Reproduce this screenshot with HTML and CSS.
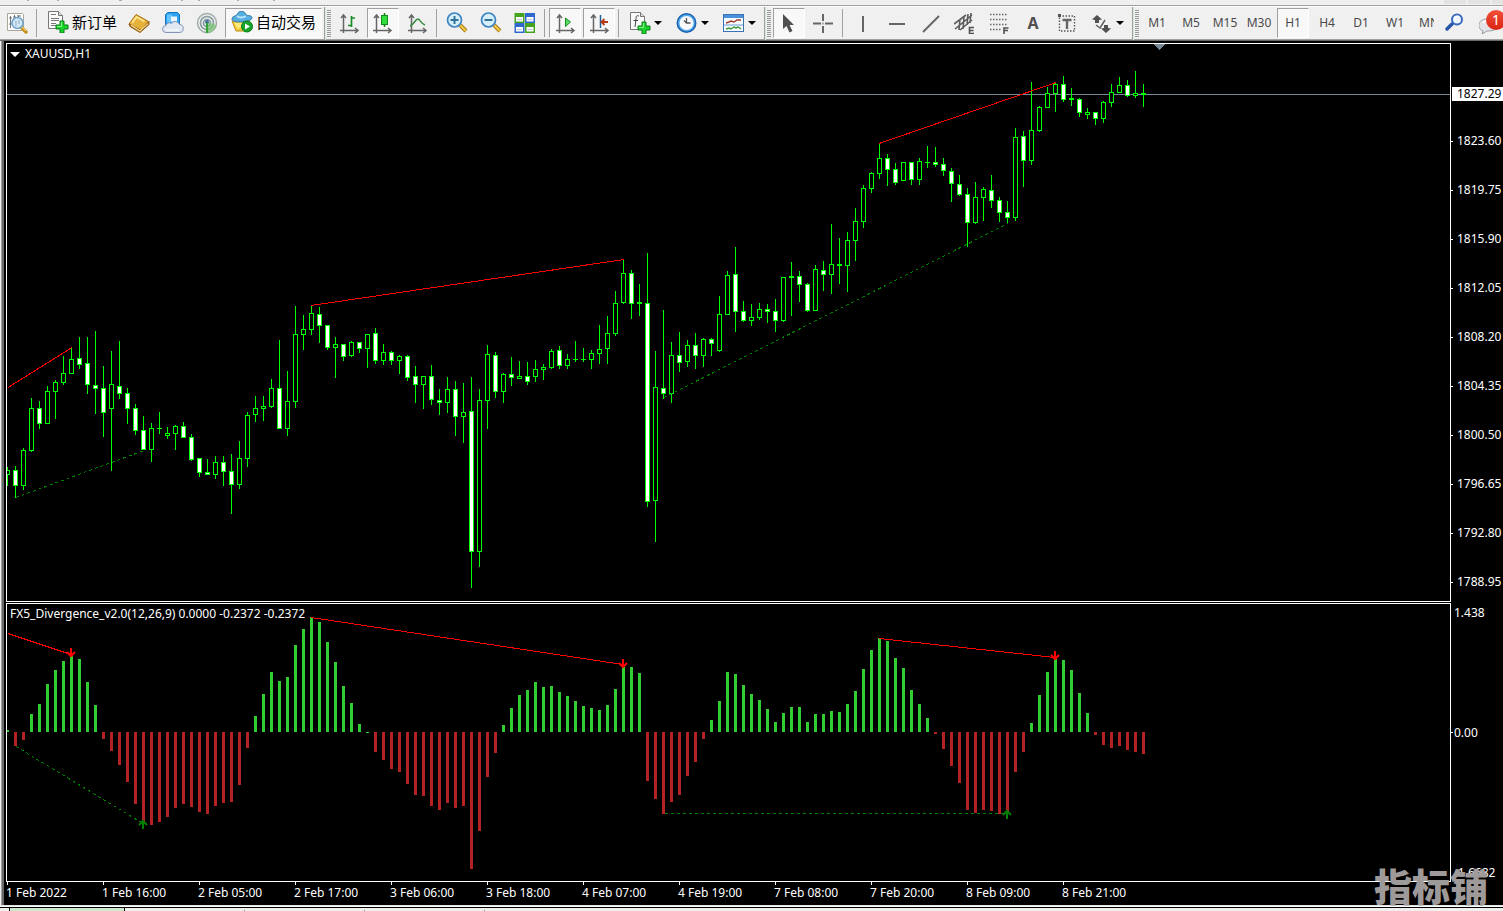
FILE: index.html
```html
<!DOCTYPE html>
<html lang="zh-CN">
<head>
<meta charset="utf-8">
<title>XAUUSD,H1</title>
<link rel="stylesheet" href="styles.css">
<script src="chart.js" defer></script>
</head>
<body>
<div class="menu-edge">
  <svg class="menu-marks" aria-hidden="true"><path d="M27 .5h2M57 .5h2M119 .5h3M181 .5h2M198 .5h2M237 .5h2M273 .5h2" stroke="#aaa"/></svg>
  <span class="win-btn"></span><span class="win-btn"></span><span class="win-btn win-btn-cut"></span>
</div>
<header class="toolbar">
  <div class="group group-first">
    <button class="tool" aria-label="Market view">
      <svg class="icon" viewBox="0 0 22 22"><path d="M1.500 1.500h15l1 1v16h-16z" fill="#fff" stroke="#aaa79a"/><path d="M4.500 4v12M8.500 3v7M12.500 3v5M3 6h3M7 5h3M11 4h4M3 12h3" stroke="#777"/><path d="m15 15 5 5" stroke="#c69320" stroke-width="3.500" stroke-linecap="round"/><path d="m15 14 5 5" stroke="#ffe28a"/><circle cx="11.500" cy="11" r="5.500" fill="#cfe8f8" fill-opacity=".9" stroke="#6fa4cc" stroke-width="1.500"/><path d="M10 9v5M13 8v4" stroke="#86a9c4"/></svg>
    </button>
    <span class="sep"></span>
    <button class="tool tool-order">
      <svg class="icon" viewBox="0 0 22 22"><path d="M1.500.500h10l4 4v13h-14z" fill="#fafafa" stroke="#777"/><path d="M11.500.500v4h4" fill="#ddd" stroke="#777"/><path d="M4 3.500h5M4 7.500h8M4 9.500h8M4 12.500h5M4 14.500h5" stroke="#777"/><path d="M13 10h4v4h4v4h-4v4h-4v-4H9v-4h4z" fill="#19d52a" stroke="#087d15"/><path d="M14.500 11v4.500H10" fill="none" stroke="#8ef58f"/></svg>
      <span>新订单</span>
    </button>
    <button class="tool" aria-label="Library">
      <svg class="icon" viewBox="0 0 22 22"><path d="m1 12 7-9.500 12.500 7-7.500 9z" fill="#e6b138" stroke="#a86d12"/><path d="m1 12 1 2.500 10 6 9-8v-3l-8 9z" fill="#c98a20" stroke="#8b580d"/><path d="M3 13 12 19l8-7.500" fill="none" stroke="#fff4c8"/><path d="m4 11 4.500-6 8 4.500" fill="none" stroke="#ffe58d" stroke-width="2"/></svg>
    </button>
    <button class="tool" aria-label="Virtual hosting">
      <svg class="icon" viewBox="0 0 22 22"><path d="m3.500 2.500 2-2h10l2 2v10h-14z" fill="#2da2f2" stroke="#1673bd"/><path d="M5 2.500h5v8H5z" fill="#67c4ff"/><path d="M9 4.500h6v5H9z" fill="#e8f7ff"/><path d="M4 20.500h13a4 4 0 0 0 .500-8 4.500 4.500 0 0 0-8-1 3.500 3.500 0 0 0-5.500 2 3.500 3.500 0 0 0 0 7z" fill="#e1e8f2" stroke="#8595b6"/><path d="M4 18h13" stroke="#fff"/></svg>
    </button>
    <button class="tool" aria-label="Signals">
      <svg class="icon" viewBox="0 0 22 22"><circle cx="11" cy="11" r="9.500" fill="#e9eee9" stroke="#a5adb1" stroke-width="1.500"/><circle cx="11" cy="11" r="6.500" fill="none" stroke="#8c9ba4" stroke-width="1.600"/><circle cx="11" cy="11" r="3.500" fill="none" stroke="#7d939c" stroke-width="1.500"/><path d="M11 10v11a10 10 0 0 0 9.500-8z" fill="#73c46c" fill-opacity=".65"/><circle cx="11" cy="10" r="2" fill="#46709b"/><path d="M11 11v10" stroke="#31a334" stroke-width="2"/></svg>
    </button>
    <button class="tool tool-auto pressed" aria-pressed="true">
      <svg class="icon" viewBox="0 0 22 22"><path d="m1 10 4 10h10l4-9z" fill="#f2cc3b" stroke="#bd8b16"/><path d="M3 12h12l-8 6z" fill="#ffe97c"/><path d="M1 8c0-3 4-3 5-4 1-5 8-5 9 0 2 1 6 0 6 3 0 4-20 6-20 1z" fill="#57aee0" stroke="#2c7aa9"/><path d="M6 5c2 2 6 2 9 0" fill="none" stroke="#b8e5fb" stroke-width="2"/><circle cx="16" cy="15.500" r="5.500" fill="#16a52a" stroke="#0b7c1b"/><path d="m14 12.500 5 3-5 3z" fill="#fff"/></svg>
      <span>自动交易</span>
    </button>
  </div>

  <div class="group">
    <span class="grip"></span>
    <button class="tool" aria-label="Bar chart">
      <svg class="icon" viewBox="0 0 22 22"><path d="M5.500 3v18M2 18.500h18M3 6l2.500-3L8 6M17 16l3 2.500-3 2.500" class="axis"/><path d="M13.500 4v11M13.500 6H17M10 13.500h3" fill="none" stroke="#1b8b27" stroke-width="1.700"/></svg>
    </button>
    <button class="tool pressed" aria-label="Candlesticks" aria-pressed="true">
      <svg class="icon" viewBox="0 0 22 22"><path d="M4.500 3v18M1 18.500h18M2 6l2.500-3L7 6M16 16l3 2.500-3 2.500" class="axis"/><path d="M12.500 1v14" stroke="#147a1e" stroke-width="1.500"/><rect x="9.500" y="3.500" width="6" height="9" fill="#31dc3e" stroke="#128b1d"/></svg>
    </button>
    <button class="tool" aria-label="Line chart">
      <svg class="icon" viewBox="0 0 22 22"><path d="M5.500 3v18M2 18.500h18M3 6l2.500-3L8 6M17 16l3 2.500-3 2.500" class="axis"/><path d="M4 14c4-1 5-7 8-7 2 0 3 5 7 6" fill="none" stroke="#378c3e" stroke-width="1.500"/></svg>
    </button>
    <span class="sep"></span>
    <button class="tool" aria-label="Zoom in">
      <svg class="icon" viewBox="0 0 22 22"><path d="m14 13 6 6" stroke="#a87811" stroke-width="4"/><path d="m14 13 6 6" stroke="#f2cd4b" stroke-width="2"/><circle cx="8.500" cy="8" r="7" fill="#d6effb" stroke="#3c83c0" stroke-width="1.700"/><path d="M8.500 4v8M4.500 8h8" stroke="#31729c" stroke-width="2"/></svg>
    </button>
    <button class="tool" aria-label="Zoom out">
      <svg class="icon" viewBox="0 0 22 22"><path d="m14 13 6 6" stroke="#a87811" stroke-width="4"/><path d="m14 13 6 6" stroke="#f2cd4b" stroke-width="2"/><circle cx="8.500" cy="8" r="7" fill="#d6effb" stroke="#3c83c0" stroke-width="1.700"/><path d="M4.500 8h8" stroke="#31729c" stroke-width="2"/></svg>
    </button>
    <button class="tool" aria-label="Tile windows">
      <svg class="icon" viewBox="0 0 22 22"><path d="M.500 1h10v10H.500zM11 11h10v10H11z" fill="#45a41d"/><path d="M11 1h10v10H11zM.500 11h10v10H.500z" fill="#2e68ce"/><path d="M2 5h7v4.500H2zM12.500 5h7v4.500h-7zM2 15h7v4.500H2zM12.500 15h7v4.500h-7z" fill="#fff"/><path d="M3 7.500h5M13.500 7.500h5M3 17.500h5M13.500 17.500h5" stroke="#b7c8dd"/></svg>
    </button>
    <span class="sep"></span>
    <button class="tool pressed" aria-label="Auto scroll" aria-pressed="true">
      <svg class="icon" viewBox="0 0 22 22"><path d="M5.500 3v18M2 18.500h18M3 6l2.500-3L8 6M17 16l3 2.500-3 2.500" class="axis"/><path d="m11.500 6 5 4-5 4.500z" fill="#5adb62" stroke="#188b25"/></svg>
    </button>
    <button class="tool pressed" aria-label="Chart shift" aria-pressed="true">
      <svg class="icon" viewBox="0 0 22 22"><path d="M5.500 3v18M2 18.500h18M3 6l2.500-3L8 6M17 16l3 2.500-3 2.500" class="axis"/><path d="M12.500 3v13" stroke="#205f91" stroke-width="1.500"/><path d="M20 10h-6M16.500 7 13.500 10l3 3" fill="none" stroke="#b33a16" stroke-width="1.800"/></svg>
    </button>
    <span class="sep"></span>
    <button class="tool tool-menu" aria-label="Indicators">
      <svg class="icon" viewBox="0 0 22 22"><path d="M1.500.500h10l4 4v13h-14z" fill="#fafafa" stroke="#777"/><path d="M11.500.500v4h4" fill="#ddd" stroke="#777"/><path d="M10 4C7 3 7 5 7 7l-1 8M4.500 8.500H9" fill="none" stroke="#444"/><path d="M13 10h4v4h4v4h-4v4h-4v-4H9v-4h4z" fill="#19d52a" stroke="#087d15"/><path d="M14.500 11v4.500H10" fill="none" stroke="#8ef58f"/></svg>
      <svg class="caret" viewBox="0 0 8 4"><path d="M0 0h8L4 4z"/></svg>
    </button>
    <button class="tool tool-menu" aria-label="Periods">
      <svg class="icon" viewBox="0 0 22 22"><circle cx="10.500" cy="11" r="10" fill="#185fae"/><circle cx="10.500" cy="11" r="8.500" fill="#55a9ec"/><circle cx="10.500" cy="11" r="7" fill="#f8f9fa"/><path d="M10.500 6v5h4M10.500 11 8 8.500" fill="none" stroke="#555" stroke-width="1.300"/></svg>
      <svg class="caret" viewBox="0 0 8 4"><path d="M0 0h8L4 4z"/></svg>
    </button>
    <button class="tool tool-menu" aria-label="Templates">
      <svg class="icon" viewBox="0 0 22 22"><rect x=".500" y="2.500" width="20" height="17" fill="#f6fbff" stroke="#3973b5"/><path d="M1 3h19v3H1z" fill="#4b90db"/><path d="M1 13h19" stroke="#6b9dce"/><path d="m3 11 3-1 2-1 3 1 3-2h4" fill="none" stroke="#a33f2c" stroke-width="1.400"/><path d="m3 17 3-1 2 1 3-2 2 1 2-1 3 2" fill="none" stroke="#3a9c38" stroke-width="1.400"/></svg>
      <svg class="caret" viewBox="0 0 8 4"><path d="M0 0h8L4 4z"/></svg>
    </button>
  </div>

  <div class="group">
    <span class="grip"></span>
    <button class="tool pressed" aria-label="Cursor" aria-pressed="true">
      <svg class="icon" viewBox="0 0 22 22"><path d="M5 2v15l3.500-3 3 6.500 3-1.500-3-6H16z" fill="#505050"/></svg>
    </button>
    <button class="tool" aria-label="Crosshair">
      <svg class="icon" viewBox="0 0 22 22"><path d="M11 2v7M11 14v7M1 11.500h8M13 11.500h8M10.500 11.500h1" class="line"/></svg>
    </button>
    <span class="sep"></span>
    <button class="tool" aria-label="Vertical line">
      <svg class="icon" viewBox="0 0 22 22"><path d="M11 4v16" class="line"/></svg>
    </button>
    <button class="tool" aria-label="Horizontal line">
      <svg class="icon" viewBox="0 0 22 22"><path d="M3 12h16" class="line"/></svg>
    </button>
    <button class="tool" aria-label="Trendline">
      <svg class="icon" viewBox="0 0 22 22"><path d="M3 20 19 4" class="line"/></svg>
    </button>
    <button class="tool" aria-label="Channel">
      <svg class="icon" viewBox="0 0 22 22"><path d="M0 12 12 3M1 17 18 3M6 18 18 8M6 7l-1 11M10 4 9 17M14 2l-1 11M17 1l-1 10" stroke="#5c5c5c" stroke-width="1.600"/><path d="M20 15.500h-4.500v6H20M16 18.500h3.500" fill="none" stroke="#505050" stroke-width="1.600"/></svg>
    </button>
    <button class="tool" aria-label="Fibonacci">
      <svg class="icon" viewBox="0 0 22 22"><path d="M2 2.500h18M2 7.500h18M2 12.500h18M2 17.500h12" stroke="#666" stroke-width="1.400" stroke-dasharray="1.500 1.500"/><path d="M20.500 16H16v6M16 18.500h4" fill="none" stroke="#505050" stroke-width="1.600"/></svg>
    </button>
    <button class="tool letter" aria-label="Text">A</button>
    <button class="tool" aria-label="Text label">
      <svg class="icon" viewBox="0 0 22 22"><rect x="3.500" y="4" width="15" height="15" fill="none" stroke="#555" stroke-width="1.400" stroke-dasharray="1.500 1.500"/><path d="M2 2h3v3H2z" fill="#555"/><path d="M6.500 8h9M11 8v9" fill="none" stroke="#666" stroke-width="2.400"/></svg>
    </button>
    <button class="tool tool-menu" aria-label="Arrows">
      <svg class="icon" viewBox="0 0 22 22"><path d="m6 3 5 4.500L8 8v3H4V8l-3-.500z" fill="#505050"/><path d="m15 21-5-4.500 3-.500v-3h4v3l3 .500z" fill="#505050"/><path d="m5 13 4 3 5-8" fill="none" stroke="#606060" stroke-width="1.500"/></svg>
      <svg class="caret" viewBox="0 0 8 4"><path d="M0 0h8L4 4z"/></svg>
    </button>
  </div>

  <div class="group group-frames">
    <span class="grip"></span>
    <button class="tool">M1</button>
    <button class="tool">M5</button>
    <button class="tool">M15</button>
    <button class="tool">M30</button>
    <button class="tool pressed" aria-pressed="true">H1</button>
    <button class="tool">H4</button>
    <button class="tool">D1</button>
    <button class="tool">W1</button>
    <button class="tool">MN</button>
  </div>

  <div class="side">
    <button class="tool" aria-label="Search">
      <svg class="icon" viewBox="0 0 22 22"><path d="m9 12-5 5" stroke="#2856a8" stroke-width="3.500" stroke-linecap="round"/><circle cx="14" cy="7.500" r="5" fill="#eef5fc" stroke="#3867bd" stroke-width="2"/><path d="M11.500 6.500a3 3 0 0 1 4-2" fill="none" stroke="#fff" stroke-width="1.500"/></svg>
    </button>
    <button class="tool chat" aria-label="Messages">
      <svg class="icon" viewBox="0 0 22 22"><path d="M8 7c-10 0-10 10-4 12l-1 3 5-3c8 0 10-2 10-6z" fill="#e3e3e8" stroke="#9a9aa3"/><path d="M4 11c2-3 5-3 8-2" fill="none" stroke="#fff" stroke-width="2"/></svg>
      <span class="badge">1</span>
    </button>
  </div>
</header>

<main class="window">
  <section class="plot plot-price">
    <svg class="canvas" id="price" aria-label="XAUUSD candles"></svg>
    <h1 class="title"><svg class="title-caret" viewBox="0 0 10 5"><path d="M0 0h10L5 5z"/></svg>XAUUSD,H1</h1>
  </section>
  <div class="scale scale-price">
    <ul class="levels">
      <li>1823.60</li><li>1819.75</li><li>1815.90</li><li>1812.05</li><li>1808.20</li>
      <li>1804.35</li><li>1800.50</li><li>1796.65</li><li>1792.80</li><li>1788.95</li>
    </ul>
    <span class="current">1827.29</span>
  </div>
  <section class="plot plot-osc">
    <svg class="canvas" id="osc" aria-label="FX5 Divergence histogram"></svg>
    <h2 class="title">FX5_Divergence_v2.0(12,26,9) 0.0000 -0.2372 -0.2372</h2>
  </section>
  <div class="scale scale-osc">
    <span class="high">1.438</span><span class="zero">0.00</span><span class="low">-1.6682</span>
  </div>
  <ol class="times">
    <li>1 Feb 2022</li><li>1 Feb 16:00</li><li>2 Feb 05:00</li><li>2 Feb 17:00</li><li>3 Feb 06:00</li><li>3 Feb 18:00</li>
    <li>4 Feb 07:00</li><li>4 Feb 19:00</li><li>7 Feb 08:00</li><li>7 Feb 20:00</li><li>8 Feb 09:00</li><li>8 Feb 21:00</li>
  </ol>
  <div class="watermark">指标铺</div>
</main>
<footer class="tabs"><span class="tab-active"></span><span class="tab"></span><span class="tab"></span><span class="tab"></span></footer>
</body>
</html>
```

FILE: styles.css
```css
* { box-sizing: border-box; }

body {
  margin: 0;
  height: 100vh;
  display: flex;
  flex-direction: column;
  overflow: hidden;
  background: #f0f0f0;
  color: #000;
  font: 12px/16px "Noto Sans", "Noto Sans CJK SC", sans-serif;
}

ul, ol { margin: 0; padding: 0; list-style: none; }

/* menu edge */
.menu-edge {
  position: relative;
  flex: none;
  height: 7px;
  display: flex;
  justify-content: flex-end;
  gap: 2px;
  border-bottom: 1px solid #fff;
  box-shadow: inset 0 -1px #a0a0a0;
}
.menu-marks { position: absolute; left: 0; top: 0; width: 100%; height: 2px; }
.win-btn { width: 22px; height: 4px; background: #e3e3e3; }
.win-btn-cut { width: 11px; }

/* toolbar */
.toolbar {
  flex: none;
  display: flex;
  height: 34px;
  border-bottom: 1px solid #696969;
  box-shadow: inset 0 -1px #a0a0a0;
}
.group {
  flex: none;
  display: flex;
  align-items: flex-start;
  gap: 2px;
  padding: 1px 2px 0 2px;
  border-left: 1px solid #a0a0a0;
  box-shadow: inset 1px 0 #d5ead8;
}
.group-first { padding-left: 1px; border-left: 0; box-shadow: none; }
.group-frames { flex: 1 1 0; min-width: 0; overflow: hidden; }
.grip {
  flex: none;
  width: 4px;
  height: 27px;
  margin-top: 2px;
  background: repeating-linear-gradient(#999 0 1px, #f0f0f0 1px 2px);
}
.sep { flex: none; width: 1px; height: 28px; margin: 1px 2px 0 1px; background: #a0a0a0; }
.tool {
  flex: none;
  display: flex;
  align-items: center;
  justify-content: center;
  width: 32px;
  height: 30px;
  padding: 0;
  border: 1px solid transparent;
  background: none;
  color: #4a4a4a;
  font: 12px/16px "Noto Sans", sans-serif;
}
.pressed { background: #f8f8f8; border-color: #a0a0a0 #fff #fff #a0a0a0; }
.icon { flex: none; width: 22px; height: 22px; }
.tool-order, .tool-auto {
  width: auto;
  gap: 3px;
  padding: 0 3px 2px 5px;
  color: #000;
  font: 15px/20px "Noto Sans CJK SC", sans-serif;
}
.tool-auto { padding-right: 5px; }
.tool-menu { width: 45px; gap: 3px; }
.caret { flex: none; width: 8px; height: 4px; }
.letter { color: #505050; font-size: 16px; font-weight: 700; }
.axis { fill: none; stroke: #666; stroke-width: 1.5px; }
.line { fill: none; stroke: #666; stroke-width: 2px; }

.side { flex: none; display: flex; gap: 2px; width: 69px; padding: 1px 0 0 4px; overflow: hidden; }
.chat { position: relative; justify-content: flex-start; padding-left: 6px; }
.badge {
  position: absolute;
  left: 13px;
  top: 1px;
  width: 20px;
  height: 20px;
  border-radius: 50%;
  background: linear-gradient(#f0503a, #d92410);
  color: #fff;
  font-size: 14px;
  line-height: 20px;
  text-align: center;
}

/* chart window */
.window {
  position: relative;
  flex: 1;
  min-height: 0;
  display: grid;
  grid-template-columns: minmax(0, 1fr) 52px;
  grid-template-rows: minmax(0, 1fr) 279px 23px;
  margin-left: 2px;
  padding: 2px 0 0 2px;
  border-left: 2px solid #696969;
  box-shadow: -1px 0 #a0a0a0;
  background: #000;
  color: #fff;
}
.plot { position: relative; border: 1px solid #fff; overflow: hidden; }
.plot-price { margin-bottom: 1px; }
.canvas { position: absolute; left: 0; top: 0; width: 100%; height: 100%; }
.title {
  position: relative;
  display: flex;
  align-items: center;
  gap: 5px;
  margin: 2px 0 0 3px;
  font: 12px/16px "Noto Sans", sans-serif;
}
.title-caret { width: 10px; height: 5px; fill: #fff; }

.scale { position: relative; }
.levels { display: grid; gap: 33px; padding-top: 90px; }
.levels li { height: 16px; padding-left: 6px; background: linear-gradient(#fff, #fff) 0 8px / 2px 1px no-repeat; }
.current {
  position: absolute;
  left: 1px;
  right: 0;
  top: 44px;
  padding-left: 5px;
  height: 14px;
  line-height: 14px;
  background: #fff;
  color: #000;
}
.scale-osc { display: grid; align-content: start; padding: 2px 0 0 3px; }
.scale-osc::before {
  content: "";
  position: absolute;
  left: 0;
  top: 129px;
  width: 2px;
  height: 1px;
  background: #fff;
}
.scale-osc .zero { margin-top: 104px; }
.scale-osc .low { margin-top: 124px; }

.times { grid-column: 1 / -1; display: flex; overflow: hidden; }
.times li {
  flex: none;
  width: 96px;
  padding-top: 3px;
  background: linear-gradient(#fff, #fff) 1px 0 / 1px 3px no-repeat;
}
.watermark {
  position: absolute;
  right: 15px;
  bottom: 1px;
  color: #9f9a9a;
  font: 900 38px/38px "Noto Sans CJK SC", sans-serif;
}

/* bottom tabs */
.tabs {
  flex: none;
  display: flex;
  height: 6px;
  padding-left: 9px;
  border-top: 1px solid #e3e3e3;
  box-shadow: inset 0 1px #fff, inset 0 2px #000;
}
.tab-active { width: 116px; margin-top: 2px; background: #cce8cc; border: solid #000; border-width: 0 1px; }
.tab { width: 120px; margin-top: 4px; border-right: 1px solid #888; }
```

FILE: chart.js
```js
const NS = 'http://www.w3.org/2000/svg';
const STEP = 8;
const FIRST_X = 7;

// high, body top, body bottom, low; a trailing 1 marks a falling (filled) candle
const candles = `467 470 475 486|466 470 486 498 1|448 450 486 490|398 408 451 452|401 408 424 429 1|386 391 424 424|380 382 392 419|356 373 383 385|348 359 374 374|337 358 365 369 1|337 363 385 394 1|331 385 389 414 1|366 388 413 437 1|351 384 409 471|341 386 394 399 1|388 393 409 424 1|404 408 431 435 1|416 430 450 450 1|423 428 450 462|412 428 429 434|427 433 436 439|425 426 434 450|422 426 438 438 1|434 437 460 461 1|458 458 473 477 1|459 472 475 475 1|456 462 475 479|456 462 472 486 1|454 471 485 514 1|441 458 485 489|412 415 459 467|396 408 415 422|396 406 409 421|379 388 407 408|340 388 429 429 1|371 401 429 436|306 334 402 408|315 329 335 350|305 313 330 335|307 314 326 343 1|325 325 348 350 1|337 344 348 378|344 344 357 361 1|341 342 356 357|342 342 349 353 1|334 334 349 368|328 333 361 364 1|344 352 361 365|351 352 361 365 1|355 356 361 374|355 356 378 381 1|366 376 385 403 1|376 376 385 409|365 376 400 405 1|389 400 403 415 1|377 389 403 413|381 389 417 436 1|383 412 417 443|377 411 552 588 1|389 400 552 567|345 354 401 429|352 355 392 398 1|373 374 392 403|357 374 378 386 1|361 376 379 379|362 376 382 385 1|360 369 377 382|364 367 370 380|349 351 368 369|346 350 366 369 1|354 359 366 369|341 359 360 362|348 359 360 362|350 353 360 369|325 349 354 364|316 333 349 364|291 303 334 336|260 273 303 304|270 273 304 319 1|284 302 304 316|253 303 502 507 1|351 387 501 542|310 388 394 399 1|342 355 394 403|332 355 363 372 1|340 345 362 367|333 345 356 369 1|338 339 356 367|338 339 344 356 1|296 314 351 352|271 275 315 315|247 274 312 332 1|301 311 321 322 1|304 317 321 326|303 309 318 320|304 309 312 323 1|299 311 321 332 1|277 277 321 322|262 276 278 316|271 276 285 302 1|283 284 311 312 1|265 269 311 311|261 270 275 291 1|224 264 275 294|238 264 266 284|232 240 266 292|208 221 241 261|185 188 222 228|172 173 189 193|143 158 174 179|154 158 170 186 1|163 169 183 185 1|162 162 181 181|162 162 180 185 1|158 161 180 185|146 162 163 168|147 162 165 167 1|158 164 171 176 1|168 171 184 202 1|175 184 195 196 1|188 194 223 247 1|182 197 223 224|187 189 198 221|175 190 201 208 1|197 200 213 222 1|201 212 218 223 1|128 137 218 221|131 136 161 187 1|82 130 161 165|106 107 131 132|87 93 108 108|83 84 94 112|76 84 100 102 1|88 98 100 106|98 99 113 117 1|108 112 115 119|112 112 119 125 1|101 102 119 123|84 92 103 107|77 85 93 93|80 85 96 97 1|71 93 96 98|84 93 95 107`
  .split('|').map(row => row.split(' ').map(Number));

const histogram = [2, -14, -8, 18, 28, 48, 62, 71, 76, 73, 50, 27, -7, -19, -33, -50, -72, -92, -93, -90, -85, -76, -72, -75, -80, -82, -74, -71, -70, -53, -16,
  16, 38, 60, 51, 55, 87, 103, 115, 110, 90, 70, 46, 29, 8, 0, -20, -28, -37, -40, -52, -63, -64, -74, -78, -71, -76, -74, -137, -99, -45, -21,
  7, 24, 37, 42, 50, 45, 46, 40, 36, 31, 26, 24, 22, 27, 43, 66, 65, 59, -49, -67, -82, -70, -63, -44, -30, -7,
  12, 31, 60, 58, 47, 38, 32, 23, 10, 19, 25, 25, 10, 18, 18, 21, 20, 28, 41, 63, 82, 94, 91, 74, 64, 42, 28, 14,
  -2, -17, -34, -51, -78, -81, -78, -79, -82, -80, -40, -20, 9, 37, 60, 73, 72, 62, 39, 19, -3, -13, -16, -14, -18, -20, -22];

function add(parent, tag, attrs) {
  const node = document.createElementNS(NS, tag);
  for (const key in attrs) node.setAttribute(key, attrs[key]);
  parent.append(node);
  return node;
}
const rect = (parent, x, y, width, height, fill) => add(parent, 'rect', { x, y, width, height, fill });

function trend(parent, x1, y1, x2, y2, up) {
  const attrs = { d: `M${x1} ${y1 + 0.5}L${x2} ${y2 + 0.5}`, stroke: up ? '#008000' : '#f00', fill: 'none' };
  if (up) attrs['stroke-dasharray'] = '3 3';
  add(parent, 'path', attrs);
}

const price = add(document.getElementById('price'), 'g', { transform: 'translate(-7 -44)', 'shape-rendering': 'crispEdges' });
rect(price, 7, 94, 4000, 1, '#778899');
add(price, 'path', { d: 'M1153 44h12l-6 6z', fill: '#778899' });
candles.forEach(([high, top, bottom, low, down], i) => {
  const x = FIRST_X + i * STEP;
  rect(price, x, high, 1, low - high, '#0f0');
  rect(price, x - 2, top, 5, bottom - top, '#0f0');
  if (bottom - top > 2) rect(price, x - 1, top + 1, 3, bottom - top - 2, down ? '#fff' : '#000');
});
trend(price, 8, 387, 72, 347);
trend(price, 311, 305, 624, 259);
trend(price, 879, 143, 1056, 82);
trend(price, 16, 497, 144, 450, true);
trend(price, 664, 397, 1008, 223, true);

const osc = add(document.getElementById('osc'), 'g', { transform: 'translate(-7 -604)', 'shape-rendering': 'crispEdges' });
histogram.forEach((value, i) => {
  const x = FIRST_X + i * STEP - 1;
  if (value > 0) rect(osc, x, 732 - value, 3, value, '#32cd32');
  else if (value < 0) rect(osc, x, 732, 3, -value, '#b22222');
  else rect(osc, x, 732, 3, 1, '#32cd32');
});
trend(osc, 8, 633, 71, 654);
trend(osc, 311, 617, 623, 664);
trend(osc, 879, 638, 1055, 657);
trend(osc, 16, 746, 143, 823, true);
trend(osc, 665, 813, 1007, 813, true);

function arrow(x, y, up) {
  const d = up ? `M${x} ${y + 9}v-8M${x - 4} ${y + 5}l4-4 4 4` : `M${x} ${y}v8M${x - 4} ${y + 4}l4 4 4-4`;
  add(osc, 'path', { d, fill: 'none', stroke: up ? '#008000' : '#f00', 'stroke-width': 2, 'shape-rendering': 'auto' });
}
arrow(71, 648);
arrow(623, 659);
arrow(1055, 651);
arrow(143, 820, true);
arrow(1007, 810, true);
```
